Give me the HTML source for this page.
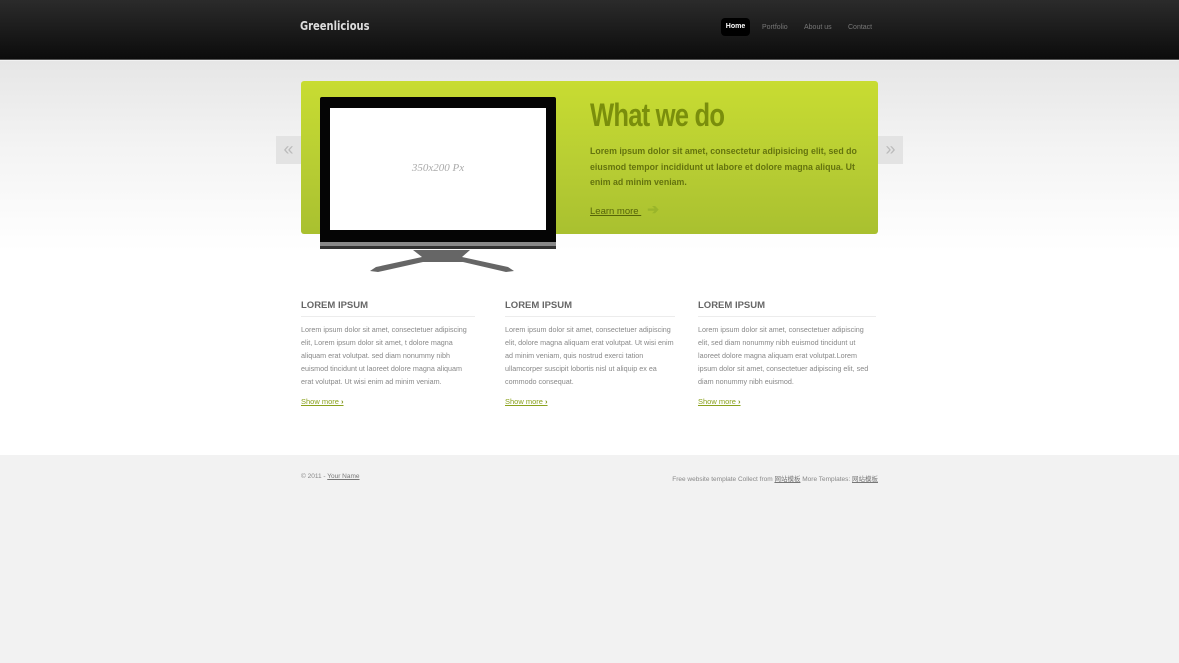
<!DOCTYPE html>
<html><head><meta charset="utf-8"><style>
*{margin:0;padding:0;box-sizing:border-box}
body{width:1179px;height:663px;overflow:hidden;background:#f2f2f2;font-family:"Liberation Sans",sans-serif;position:relative}
.hdr{position:absolute;left:0;top:0;width:1179px;height:60px;background:linear-gradient(#2b2b2b,#0c0c0c);border-bottom:1px solid #555}
.logo{position:absolute;left:300px;top:19px;color:#ddd;font-weight:bold;font-size:12px;font-family:"DejaVu Sans Condensed",sans-serif;transform:scaleX(0.92);transform-origin:left}
.nav{position:absolute;top:24px;font-size:7px;color:#777}
.home{position:absolute;left:721px;top:18px;width:29px;height:18px;background:#000;border-radius:4px;color:#fff;font-size:7px;font-weight:bold;text-align:center;line-height:18px}
.main{position:absolute;left:0;top:61px;width:1179px;height:394px;background:linear-gradient(#e6e6e6 0px,#f4f4f4 90px,#fff 190px,#fff)}
.arr{position:absolute;top:136px;width:25px;height:28px;background:#e3e3e3;color:#bbb;font-size:18px;text-align:center;line-height:26px}
.green{position:absolute;left:301px;top:81px;width:577px;height:153px;border-radius:3px;background:linear-gradient(#c8dc32,#b6cc33 60%,#a9c02f)}
.h1{position:absolute;left:590px;top:97px;font-weight:bold;font-size:32px;color:#7a8e0c;letter-spacing:-1px;transform:scaleX(0.8);transform-origin:left}
.p{position:absolute;left:590px;top:144px;width:280px;font-size:8.8px;line-height:15.5px;color:#566408;font-weight:bold;opacity:.85}
.lm{position:absolute;left:590px;top:201px;font-size:9.5px;color:#566408;text-decoration:underline}
.col{position:absolute;top:300px}
.col h3{font-size:9.5px;color:#666;font-weight:bold;height:17px;border-bottom:1px solid #ececec}
.col p{font-size:7.2px;color:#888;line-height:13px;margin-top:6px}
.col a{display:block;margin-top:9px;font-size:7.5px;color:#8aa11c;text-decoration:underline}
.ft{position:absolute;top:473px;font-size:6.5px;color:#888}
.ft u{color:#777}
</style></head><body>
<div class="hdr"></div>
<div class="logo">Greenlicious</div>
<div class="home">Home</div>
<div class="nav" style="left:762px">Portfolio</div>
<div class="nav" style="left:804px">About us</div>
<div class="nav" style="left:848px">Contact</div>
<div class="main"></div>
<div class="arr" style="left:276px">«</div>
<div class="arr" style="left:878px">»</div>
<div class="green"></div>
<svg style="position:absolute;left:318px;top:96px" width="242" height="180">
<rect x="2" y="1" width="236" height="150" fill="#050505" rx="2"/>
<rect x="12" y="12" width="216" height="122" fill="#fff"/>
<rect x="2" y="146" width="236" height="6" fill="#888"/>
<rect x="2" y="150" width="236" height="3" fill="#333"/>
<path d="M95 154 L104 161 L58 171 L52 175 L60 176 L105 166 L145 166 L188 176 L196 175 L190 171 L144 161 L152 154Z" fill="#666"/>
<text x="120" y="75" font-family="Liberation Serif,serif" font-style="italic" font-size="11" fill="#aaa" text-anchor="middle">350x200 Px</text>
</svg>
<div class="h1">What we do</div>
<div class="p">Lorem ipsum dolor sit amet, consectetur adipisicing elit, sed do eiusmod tempor incididunt ut labore et dolore magna aliqua. Ut enim ad minim veniam.</div>
<div class="lm">Learn more <span style="text-decoration:none;display:inline-block;color:#9ab52a;font-size:14px;font-weight:bold;margin-left:6px">➔</span></div>
<div class="col" style="left:301px;width:174px"><h3>LOREM IPSUM</h3><p>Lorem ipsum dolor sit amet, consectetuer adipiscing elit, Lorem ipsum dolor sit amet, t dolore magna aliquam erat volutpat. sed diam nonummy nibh euismod tincidunt ut laoreet dolore magna aliquam erat volutpat. Ut wisi enim ad minim veniam.</p><a>Show more <b style="color:#7a9010">›</b></a></div>
<div class="col" style="left:505px;width:170px"><h3>LOREM IPSUM</h3><p>Lorem ipsum dolor sit amet, consectetuer adipiscing elit, dolore magna aliquam erat volutpat. Ut wisi enim ad minim veniam, quis nostrud exerci tation ullamcorper suscipit lobortis nisl ut aliquip ex ea commodo consequat.</p><a>Show more <b style="color:#7a9010">›</b></a></div>
<div class="col" style="left:698px;width:178px"><h3>LOREM IPSUM</h3><p>Lorem ipsum dolor sit amet, consectetuer adipiscing elit, sed diam nonummy nibh euismod tincidunt ut laoreet dolore magna aliquam erat volutpat.Lorem ipsum dolor sit amet, consectetuer adipiscing elit, sed diam nonummy nibh euismod.</p><a>Show more <b style="color:#7a9010">›</b></a></div>
<div class="ft" style="left:301px">© 2011 - <u>Your Name</u></div>
<div class="ft" style="right:301px;font-family:'Liberation Sans','Noto Sans CJK SC',sans-serif">Free website template Collect from <u>网站模板</u> More Templates: <u>网站模板</u></div>
</body></html>
